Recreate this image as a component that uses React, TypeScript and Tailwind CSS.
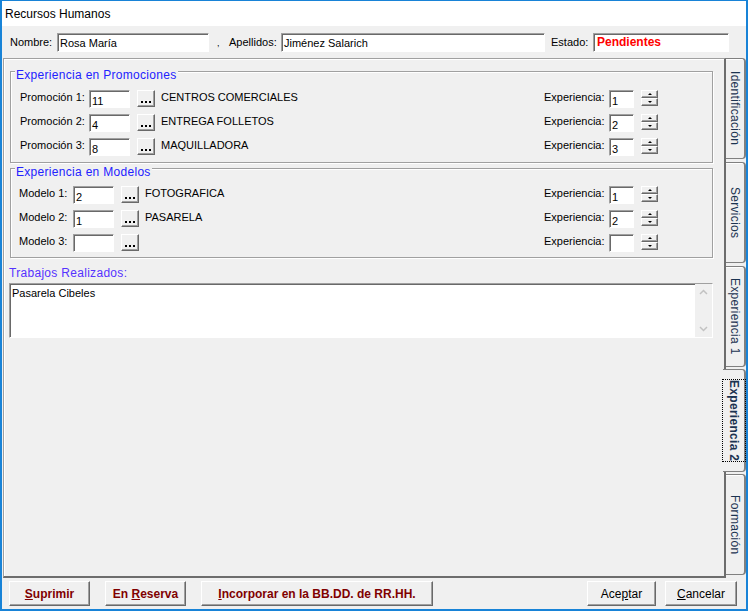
import React from 'react';

const sunken =
  'bg-white border border-t-[#a0a0a0] border-l-[#a0a0a0] border-b-white border-r-white shadow-[inset_1px_1px_0_#696969]';
const raised =
  'bg-[#f0f0f0] border border-t-white border-l-white border-b-[#696969] border-r-[#696969] shadow-[inset_-1px_-1px_0_#a0a0a0]';

type Line = { label: string; code: string; name: string; exp: string };

const promociones: Line[] = [
  { label: 'Promoción 1:', code: '11', name: 'CENTROS COMERCIALES', exp: '1' },
  { label: 'Promoción 2:', code: '4', name: 'ENTREGA FOLLETOS', exp: '2' },
  { label: 'Promoción 3:', code: '8', name: 'MAQUILLADORA', exp: '3' },
];

const modelos: Line[] = [
  { label: 'Modelo 1:', code: '2', name: 'FOTOGRAFICA', exp: '1' },
  { label: 'Modelo 2:', code: '1', name: 'PASARELA', exp: '2' },
  { label: 'Modelo 3:', code: '', name: '', exp: '' },
];

function Field({ value, className }: { value: string; className: string }) {
  return (
    <div className={`${sunken} h-[18px] mt-[3px] pl-[2px] pt-[3px] leading-[14px] whitespace-nowrap overflow-hidden ${className}`}>
      {value}
    </div>
  );
}

function Dots() {
  return (
    <div className={`${raised} ml-[7px] mt-[3px] w-[18px] h-[17px] flex items-end justify-center gap-[2px] pb-[3px]`}>
      <span className="w-[2px] h-[2px] bg-black" />
      <span className="w-[2px] h-[2px] bg-black" />
      <span className="w-[2px] h-[2px] bg-black" />
    </div>
  );
}

function Spinner() {
  return (
    <div className="ml-[7px] mt-[3px] w-[17px] flex flex-col">
      <div className={`${raised} h-[8px] flex items-center justify-center`}>
        <div className="w-0 h-0 border-x-[2px] border-x-transparent border-b-[2px] border-b-black" />
      </div>
      <div className={`${raised} h-[8px] flex items-center justify-center`}>
        <div className="w-0 h-0 border-x-[2px] border-x-transparent border-t-[2px] border-t-black" />
      </div>
    </div>
  );
}

function Row({ line, labelW, leftPad }: { line: Line; labelW: string; leftPad: string }) {
  return (
    <div className="h-[24px] flex items-start">
      <div className={`w-[533px] flex items-start ${leftPad}`}>
        <span className={`mt-[3px] leading-[14px] ${labelW}`}>{line.label}</span>
        <Field value={line.code} className="w-[41px]" />
        <Dots />
        <span className="ml-[6px] mt-[3px] leading-[14px]">{line.name}</span>
      </div>
      <span className="w-[65px] mt-[3px] leading-[14px]">Experiencia:</span>
      <Field value={line.exp} className="w-[25px]" />
      <Spinner />
    </div>
  );
}

function Group({ title, className, children }: { title: string; className: string; children: React.ReactNode }) {
  return (
    <div
      className={`relative ml-[1px] w-[703px] border border-[#a0a0a0] shadow-[1px_1px_0_#fff,inset_1px_1px_0_#fff] ${className}`}
    >
      <span className="absolute left-[4px] -top-[4px] px-[1px] bg-[#f0f0f0] text-[12px] leading-[14px] tracking-[0.3px] text-[#2222ff]">
        {title}
      </span>
      {children}
    </div>
  );
}

function Tab({ label }: { label: string }) {
  return (
    <div className="h-[101px] w-[20px] flex items-center justify-center bg-[#f0f0f0] border-t border-b border-r-2 border-[#808080] rounded-r-[4px] shadow-[inset_0_1px_0_#fff]">
      <span className="[writing-mode:vertical-rl] text-[12px] leading-[14px] tracking-[0.3px] text-[#1b3350]">{label}</span>
    </div>
  );
}

function ActiveTab({ label }: { label: string }) {
  return (
    <div className="relative z-10 -ml-[3px] h-[103px] -my-[1px] w-[23px] flex items-center justify-center bg-[#f0f0f0] border-t border-b border-r-2 border-[#808080] rounded-r-[4px]">
      <span className="[writing-mode:vertical-rl] text-[12px] leading-[14px] font-bold tracking-[0.3px] text-[#1b3350] border border-dotted border-black py-[4px]">
        {label}
      </span>
    </div>
  );
}

function WinButton({ className, children }: { className: string; children: React.ReactNode }) {
  return (
    <div className={`${raised} h-[25px] flex items-center justify-center text-[12px] ${className}`}>{children}</div>
  );
}

export default function App() {
  return (
    <div className="w-[750px] h-[612px] bg-white font-['Liberation_Sans',Arial,sans-serif] text-[11px] text-black">
      <div className="w-[748px] h-[611px] flex flex-col bg-[#f0f0f0] border-t border-l-2 border-r-2 border-b-2 border-[#1883d7]">
        {/* title bar */}
        <div className="h-[25px] bg-white flex items-center pl-[3px] text-[12px]">Recursos Humanos</div>

        {/* header */}
        <div className="h-[32px] flex items-center pl-[8px]">
          <span className="w-[47px]">Nombre:</span>
          <div className={`${sunken} w-[152px] h-[19px] pl-[2px] pt-[2px] leading-[14px]`}>Rosa María</div>
          <span className="w-[20px] pl-[8px] pt-[4px] text-[9px]">,</span>
          <span className="w-[52px]">Apellidos:</span>
          <div className={`${sunken} w-[264px] h-[19px] pl-[2px] pt-[2px] leading-[14px]`}>Jiménez Salarich</div>
          <span className="ml-[6px] w-[42px]">Estado:</span>
          <div className={`${sunken} w-[136px] h-[19px] pl-[3px] pt-[1px] leading-[15px] text-[12px] font-bold text-[#ff0000]`}>
            Pendientes
          </div>
        </div>

        {/* tab control */}
        <div className="h-[520px] flex pl-[1px]">
          <div className="w-[723px] h-full border-t border-l border-[#a0a0a0] border-r-2 border-b-2 border-r-[#6d6d6d] border-b-[#6d6d6d] shadow-[inset_1px_1px_0_#fff] pl-[5px]">
            <Group title="Experiencia en Promociones" className="mt-[12px] pt-[15px] pb-[3px]">
              {promociones.map((l) => (
                <Row key={l.label} line={l} labelW="w-[69px]" leftPad="pl-[9px]" />
              ))}
            </Group>
            <Group title="Experiencia en Modelos" className="mt-[5px] pt-[14px] pb-[2px]">
              {modelos.map((l) => (
                <Row key={l.label} line={l} labelW="w-[54px]" leftPad="pl-[8px]" />
              ))}
            </Group>
            <div className="mt-[8px] text-[12px] leading-[14px] tracking-[0.3px] text-[#5533ff]">Trabajos Realizados:</div>
            <div className={`${sunken} mt-[3px] w-[704px] h-[55px] flex`}>
              <div className="flex-1 pl-[2px] pt-[2px] leading-[14px]">Pasarela Cibeles</div>
              <div className="w-[17px] bg-[#f0f0f0] flex flex-col items-center justify-between py-[5px]">
                <svg width="9" height="6" viewBox="0 0 9 6">
                  <polyline points="1,5 4.5,1.5 8,5" fill="none" stroke="#c2c2c2" strokeWidth="1.5" />
                </svg>
                <svg width="9" height="6" viewBox="0 0 9 6">
                  <polyline points="1,1 4.5,4.5 8,1" fill="none" stroke="#c2c2c2" strokeWidth="1.5" />
                </svg>
              </div>
            </div>
          </div>

          <div className="flex flex-col gap-[3px]">
            <Tab label="Identificación" />
            <Tab label="Servicios" />
            <Tab label="Experiencia 1" />
            <ActiveTab label="Experiencia 2" />
            <Tab label="Formación" />
          </div>
        </div>

        {/* bottom buttons */}
        <div className="flex items-start pt-[3px] pl-[7px] font-bold text-[#800000]">
          <WinButton className="w-[81px]">
            <span>
              <span className="underline">S</span>uprimir
            </span>
          </WinButton>
          <WinButton className="ml-[15px] w-[81px]">
            <span>
              En <span className="underline">R</span>eserva
            </span>
          </WinButton>
          <WinButton className="ml-[15px] w-[232px]">
            <span>
              <span className="underline">I</span>ncorporar en la BB.DD. de RR.HH.
            </span>
          </WinButton>
          <WinButton className="ml-[154px] w-[69px] font-normal text-black">
            <span>
              Ace<span className="underline">p</span>tar
            </span>
          </WinButton>
          <WinButton className="ml-[9px] w-[72px] font-normal text-black">
            <span>
              <span className="underline">C</span>ancelar
            </span>
          </WinButton>
        </div>
      </div>
    </div>
  );
}
